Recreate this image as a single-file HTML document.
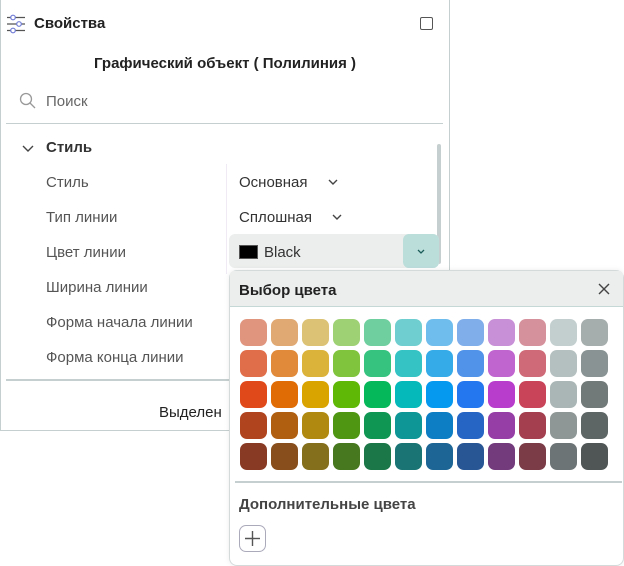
<!DOCTYPE html>
<html><head><meta charset="utf-8"><style>
*{margin:0;padding:0;box-sizing:border-box}
body{width:624px;height:566px;background:#fff;position:relative;overflow:hidden;font-family:"Liberation Sans","DejaVu Sans",sans-serif;color:#333}
.abs{position:absolute;white-space:nowrap}
.panel{position:absolute;left:0;top:0;width:450px;height:431px;box-shadow:inset 1px 0 0 #c6cfcf,inset -1px -1px 0 #c6cfcf;background:#fff}
.lbl{position:absolute;left:46px;font-size:15px;color:#555}
.val{position:absolute;left:239px;font-size:15px;color:#333}
.pop{position:absolute;left:229px;top:270px;width:395px;height:296px;background:#fff;box-shadow:inset 0 0 0 1px #d4dada,0 0 6px rgba(0,0,0,.08);border-radius:8px;overflow:hidden}
.sw{position:absolute;width:27px;height:27px;border-radius:7px}
</style></head><body>
<div class="panel">
  <svg class="abs" style="left:6px;top:14px" width="20" height="20" viewBox="0 0 20 20" fill="none" stroke="#6f7bd6" stroke-width="1.2">
    <line x1="1" y1="3.5" x2="19" y2="3.5" stroke="#555"/><line x1="1" y1="10" x2="19" y2="10" stroke="#555"/><line x1="1" y1="16.5" x2="19" y2="16.5" stroke="#555"/>
    <circle cx="7" cy="3.5" r="2.3" fill="#fff"/><circle cx="13" cy="10" r="2.3" fill="#fff"/><circle cx="7" cy="16.5" r="2.3" fill="#fff"/>
  </svg>
  <div class="abs" style="left:34px;top:15px;font-size:15px;font-weight:bold;color:#222">Свойства</div>
  <div class="abs" style="left:420px;top:17px;width:13px;height:13px;border:1.5px solid #555;border-radius:2px"></div>
  <div class="abs" style="left:0;width:450px;top:55px;text-align:center;font-size:15px;font-weight:bold;color:#222">Графический объект ( Полилиния )</div>
  <svg class="abs" style="left:19px;top:92px" width="18" height="18" viewBox="0 0 18 18" fill="none" stroke="#999" stroke-width="1.3"><circle cx="7" cy="7" r="5.5"/><line x1="11" y1="11" x2="16" y2="16"/></svg>
  <div class="abs" style="left:46px;top:93px;font-size:15px;color:#666">Поиск</div>
  <div class="abs" style="left:6px;top:123px;width:437px;height:1px;background:#c6cfcf"></div>
  <svg class="abs" style="left:21px;top:143px" width="14" height="10" viewBox="0 0 14 10" fill="none" stroke="#444" stroke-width="1.4"><polyline points="2,3 7,8 12,3"/></svg>
  <div class="abs" style="left:46px;top:139px;font-size:15px;font-weight:bold;color:#333">Стиль</div>
  <div class="abs" style="left:437px;top:144px;width:4px;height:120px;background:#c6cfcf;border-radius:2px"></div>
  <div class="abs" style="left:226px;top:164px;width:1px;height:110px;background:#f0eaf5"></div>
  <div class="lbl" style="top:174px">Стиль</div>
  <div class="lbl" style="top:209px">Тип линии</div>
  <div class="lbl" style="top:244px">Цвет линии</div>
  <div class="lbl" style="top:279px">Ширина линии</div>
  <div class="lbl" style="top:314px">Форма начала линии</div>
  <div class="lbl" style="top:349px">Форма конца линии</div>
  <div class="val" style="top:174px">Основная</div>
  <svg class="abs" style="left:327px;top:178px" width="12" height="8" viewBox="0 0 12 8" fill="none" stroke="#444" stroke-width="1.4"><polyline points="2,2 6,6 10,2"/></svg>
  <div class="val" style="top:209px">Сплошная</div>
  <svg class="abs" style="left:331px;top:213px" width="12" height="8" viewBox="0 0 12 8" fill="none" stroke="#444" stroke-width="1.4"><polyline points="2,2 6,6 10,2"/></svg>
  <div class="abs" style="left:229px;top:234px;width:210px;height:34px;background:#eceeed;border-radius:6px"></div>
  <div class="abs" style="left:403px;top:234px;width:36px;height:34px;background:#bcdedb;border-radius:6px"></div>
  <svg class="abs" style="left:415px;top:248px" width="12" height="8" viewBox="0 0 12 8" fill="none" stroke="#1c5d5a" stroke-width="1.3"><polyline points="3,2 6,5 9,2"/></svg>
  <div class="abs" style="left:239px;top:245px;width:19px;height:14px;background:#000;border:1px solid #555"></div>
  <div class="abs" style="left:264px;top:244px;font-size:15px;color:#333">Black</div>
  <div class="abs" style="left:6px;top:379px;width:230px;height:2px;background:#c6cfcf"></div>
  <div class="abs" style="left:159px;top:404px;font-size:15px;color:#222">Выделен</div>
</div>
<div class="pop">
  <div class="abs" style="left:1px;top:1px;width:393px;height:36px;background:#eceeed;border-bottom:1px solid #c6d8d6"></div>
  <div class="abs" style="left:10px;top:12px;font-size:15px;font-weight:bold;color:#222">Выбор цвета</div>
  <svg class="abs" style="left:368px;top:12px" width="14" height="14" viewBox="0 0 14 14" stroke="#444" stroke-width="1.4"><line x1="2" y1="2" x2="12" y2="12"/><line x1="12" y1="2" x2="2" y2="12"/></svg>
  <div id="g"></div>
  <div class="abs" style="left:6px;top:211px;width:387px;height:2px;background:#c6cfcf"></div>
  <div class="abs" style="left:10px;top:226px;font-size:15px;font-weight:bold;color:#444">Дополнительные цвета</div>
  <div class="abs" style="left:10px;top:255px;width:27px;height:27px;border:1px solid #aab;border-radius:7px"></div>
  <svg class="abs" style="left:15px;top:260px" width="17" height="17" viewBox="0 0 17 17" stroke="#555" stroke-width="1.4"><line x1="8.5" y1="1" x2="8.5" y2="16"/><line x1="1" y1="8.5" x2="16" y2="8.5"/></svg>
</div>
<script>
var c=[["#e0967e","#e0a974","#dbc274","#9ed174","#6fcf9f","#6fcfd0","#6fbdec","#7faeeb","#c890d6","#d6929c","#c3cfcf","#a6adad"],
["#e06e4a","#e08a3a","#dbb23a","#7fc43c","#35c37f","#35c3c4","#35abe8","#5093e9","#c064d0","#cf6b78","#b4c0bf","#8a9393"],
["#e04a1a","#e06c05","#d9a300","#5eb805","#05b85a","#05b8ba","#0599f0","#2477ee","#b83dcc","#c94459","#aab6b5","#727979"],
["#b0441e","#b05e10","#b08a10","#4f9712","#0e9652","#0e9697","#0e7ec4","#2765c4","#963da6","#a33f4f","#8e9796","#5e6665"],
["#893a24","#884f1c","#846f1c","#47771e","#1b7747","#1a7474","#1c6594","#285695","#733a7c","#7b3b47","#6d7475","#4f5655"]];
var h="";for(var r=0;r<5;r++)for(var i=0;i<12;i++)h+='<div class="sw" style="left:'+(11+i*31)+'px;top:'+(49+r*31)+'px;background:'+c[r][i]+'"></div>';
document.getElementById("g").innerHTML=h;
</script>
</body></html>
